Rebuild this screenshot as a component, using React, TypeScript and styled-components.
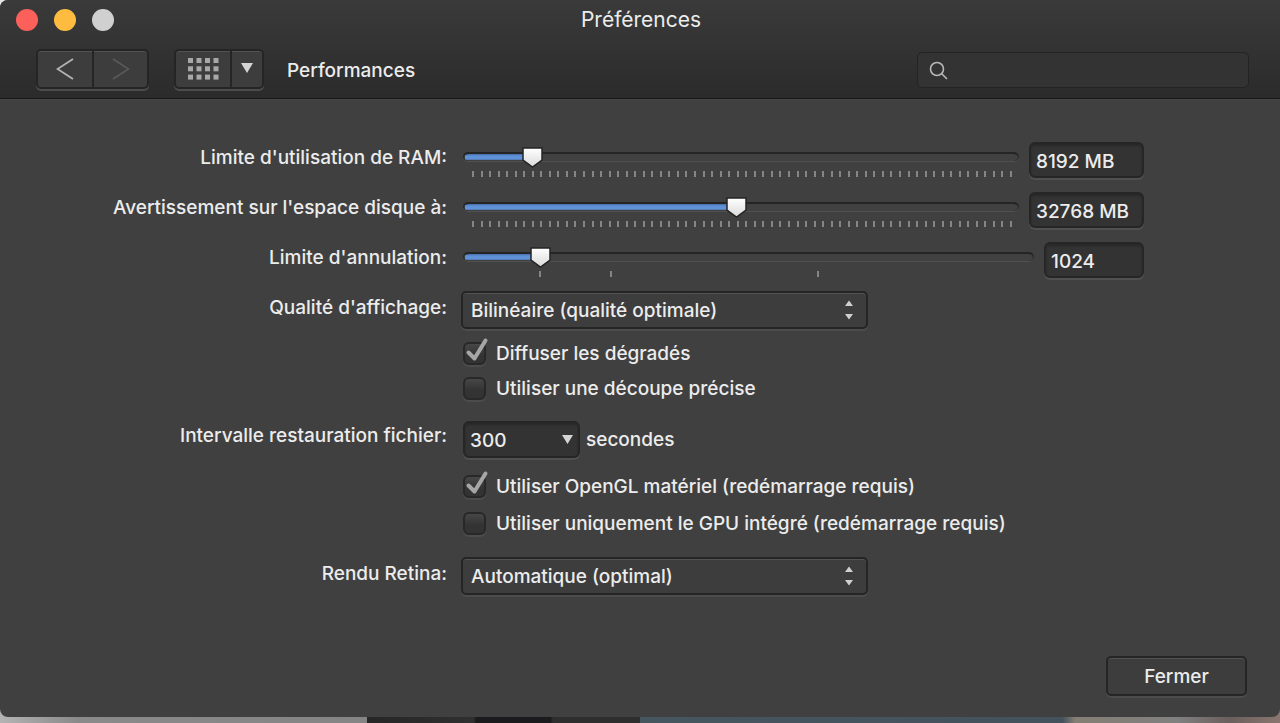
import React, { useState } from "react";
import styled, { createGlobalStyle, css } from "styled-components";

const GlobalStyle = createGlobalStyle`
  * { box-sizing: border-box; }
  body {
    margin: 0;
    background: #404040;
    color: #ececec;
    font: 500 19px/34px Inter, "Liberation Sans", sans-serif;
  }
  input, select, button { font: inherit; color: inherit; margin: 0; }
`;

const Desktop = styled.div`
  display: flex;
  min-height: 100vh;
  padding-bottom: 6px;
  background:
    radial-gradient(circle at 0 0, #e4e6ea 0 12px, transparent 12px),
    linear-gradient(90deg, #b4b4b4 0, #8a8a8a 6%, #848484 28.7%, #262626 28.7%, #303030 37%, #1b1b1d 37.2%, #1b1b1d 43%, #2e2e2e 43.2%, #2e2e2e 50%, #46565f 50%, #43525c 83%, #857f74 84%, #808080 92%, #6a5f5c 96%, #8a7670 100%);
`;

const Window = styled.div`
  flex: 1;
  display: flex;
  flex-direction: column;
  border-radius: 8px 0 8px 8px;
  overflow: hidden;
  background: #404040;
`;

const Header = styled.header`
  height: 99px;
  background: linear-gradient(#3a3a3a, #2b2b2b);
  border-bottom: 1px solid #161616;
  box-shadow: 0 1px 0 #484848;
`;

const TitleBar = styled.div`
  display: grid;
  grid-template-columns: 1fr auto 1fr;
  align-items: center;
  height: 40px;
  padding: 0 14px 0 16px;
`;

const Lights = styled.div`
  display: flex;
  gap: 16px;
`;

const Light = styled.button<{ $color: string }>`
  width: 22px;
  height: 22px;
  padding: 0;
  border: 0;
  border-radius: 50%;
  background: ${(p) => p.$color};
`;

const Title = styled.h1`
  margin: 0;
  font-size: 21px;
  font-weight: 400;
`;

const Toolbar = styled.div`
  display: flex;
  align-items: center;
  height: 60px;
  padding: 0 31px 0 36px;
`;

const raised = css`
  border: 2px solid #252525;
  border-radius: 5px;
  background: #3d3d3d;
  box-shadow: 0 2px 0 #4c4c4c, inset 0 1px 0 #525252;
`;

const sunken = css`
  border: 2px solid #262626;
  border-radius: 6px;
  background: #333333;
  box-shadow: 0 2px 0 #505050, inset 0 2px 2px #292929;
`;

const ButtonGroups = styled.div`
  display: flex;
  gap: 25px;
  padding-bottom: 3px;
`;

const Segments = styled.div`
  ${raised}
  display: flex;
  height: 40px;
`;

const Segment = styled.button<{ $width: number }>`
  display: flex;
  align-items: center;
  justify-content: center;
  width: ${(p) => p.$width}px;
  padding: 0;
  border: 0;
  background: none;
  & + & { border-left: 2px solid #252525; }
`;

const PaneName = styled.h2`
  flex: 1;
  margin: 0 0 0 23px;
  padding-top: 2px;
  font-size: 19px;
  font-weight: 500;
`;

const SearchBox = styled.label`
  display: flex;
  align-items: center;
  gap: 8px;
  width: 332px;
  height: 36px;
  padding: 0 10px;
  border: 1px solid #232323;
  border-radius: 5px;
  background: #333333;
`;

const SearchInput = styled.input`
  flex: 1;
  min-width: 0;
  height: 28px;
  border: 0;
  outline: 0;
  background: none;
`;

const Form = styled.main`
  flex: 1;
  padding: 42px 0 0;
`;

const Row = styled.div<{ $after: number }>`
  display: grid;
  grid-template-columns: 35% 1fr;
  column-gap: 13px;
  margin-bottom: ${(p) => p.$after}px;
`;

const RowLabel = styled.label`
  padding-right: 1px;
  text-align: right;
  white-space: nowrap;
`;

const Control = styled.div`
  grid-column: 2;
  display: flex;
  padding-right: 136px;
`;

const ComboControl = styled(Control)`
  align-items: center;
  padding-top: 2px;
`;

const SliderBox = styled.div`
  flex: 1;
  margin: 6px 10px 0 2px;
`;

const thumb = encodeURIComponent(
  `<svg xmlns="http://www.w3.org/2000/svg" width="21" height="21"><defs><linearGradient id="g" x2="0" y2="1"><stop offset="0" stop-color="#fff"/><stop offset="1" stop-color="#dadada"/></linearGradient></defs><path d="M1 1H20V13L10.500 20L1 13Z" fill="url(#g)" stroke="#242424" stroke-width="1.500"/></svg>`
);

const Slider = styled.input`
  display: block;
  appearance: none;
  width: 100%;
  height: 20px;
  background: none;
  outline: 0;
  &::-webkit-slider-runnable-track {
    height: 10px;
    border-radius: 5px;
    border-top: 2px solid #252525;
    border-bottom: 1px solid #505050;
    box-shadow: inset 1px 0 0 #252525, inset -1px 0 0 #252525;
    background: linear-gradient(#456ba5, #5f92d8 2px, #5f92d8 5px, #4a6a94 6px) 2px 0 / var(--fill) 6px no-repeat, #414141;
  }
  &::-webkit-slider-thumb {
    appearance: none;
    width: 21px;
    height: 21px;
    margin-top: -7px;
    border: 0;
    background: url("data:image/svg+xml,${thumb}") no-repeat;
  }
`;

const Ticks = styled.svg`
  display: block;
  width: calc(100% - 18px);
  height: 7px;
  margin: 4px 9px 0;
  overflow: visible;
  fill: #858585;
  shape-rendering: crispEdges;
`;

const Field = styled.input<{ $width: number }>`
  ${sunken}
  width: ${(p) => p.$width}px;
  height: 37px;
  padding: 2px 5px 0;
  outline: 0;
`;

const RangeField = styled(Field)`
  margin-top: 1px;
  height: 36px;
`;

const SelectBox = styled.div`
  display: grid;
  flex: 0 1 407px;
  height: 38px;
  > * { grid-area: 1 / 1; }
  > svg { place-self: center end; margin-right: 14px; pointer-events: none; }
`;

const Select = styled.select`
  ${raised}
  appearance: none;
  width: 100%;
  height: 38px;
  padding: 2px 36px 0 8px;
  line-height: 32px;
  outline: 0;
`;

const ComboBox = styled.div`
  display: grid;
  width: 117px;
  height: 37px;
  margin: 0 6px 0 2px;
  > * { grid-area: 1 / 1; }
  > svg { place-self: center end; margin-right: 7px; pointer-events: none; }
`;

const Check = styled.label`
  display: flex;
  align-items: center;
  height: 35px;
  padding: 2px 0 0 2px;
  white-space: nowrap;
`;

const CheckMark = styled.span`
  display: grid;
  width: 23px;
  height: 23px;
  margin-right: 10px;
  > * { grid-area: 1 / 1; }
  > svg { overflow: visible; pointer-events: none; }
  > input:not(:checked) + svg { visibility: hidden; }
`;

const CheckInput = styled.input`
  appearance: none;
  width: 23px;
  height: 23px;
  border: 2px solid #282828;
  border-radius: 6px;
  background: linear-gradient(#474747, #333333 60%);
  box-shadow: 0 2px 0 #4c4c4c;
`;

const Footer = styled.footer`
  display: flex;
  justify-content: flex-end;
  padding: 0 33px 21px;
`;

const CloseButton = styled.button`
  ${raised}
  width: 141px;
  height: 40px;
  padding: 2px 0 0;
`;

type RangeProps = { id: string; min: number; max: number; initial: number; step: number; ticks: number[]; unit: string; width: number };

function RangeRow({ id, label, ...p }: RangeProps & { label: string }) {
  const [value, setValue] = useState(p.initial);
  const ratio = (value - p.min) / (p.max - p.min);
  const style = { "--fill": `${ratio * 100}%` } as React.CSSProperties;
  return (
    <Row $after={13}>
      <RowLabel htmlFor={id}>{label}</RowLabel>
      <Control>
        <SliderBox>
          <Slider id={id} type="range" min={p.min} max={p.max} step={p.step} value={value} style={style}
            onChange={(e) => setValue(Number(e.target.value))} />
          <Ticks aria-hidden="true">
            {p.ticks.map((t) => <rect key={t} x={`${t * 100}%`} width="2" height="6" />)}
          </Ticks>
        </SliderBox>
        <RangeField $width={p.width} aria-label={label} value={`${value}${p.unit}`} readOnly />
      </Control>
    </Row>
  );
}

function CheckRow({ children, checked, after }: { children: string; checked?: boolean; after: number }) {
  return (
    <Row $after={after}>
      <Control>
        <Check>
          <CheckMark>
            <CheckInput type="checkbox" defaultChecked={checked} />
            <svg width="23" height="23" viewBox="0 0 23 23" fill="none" stroke="#a6a6a6" strokeWidth="4" strokeLinecap="round" strokeLinejoin="round">
              <path d="M5.500 10.500L11.500 16.500L22.500 -1.500" />
            </svg>
          </CheckMark>
          {children}
        </Check>
      </Control>
    </Row>
  );
}

function SelectRow({ id, label, options, after }: { id: string; label: string; options: string[]; after: number }) {
  return (
    <Row $after={after}>
      <RowLabel htmlFor={id}>{label}</RowLabel>
      <Control>
        <SelectBox>
          <Select id={id}>{options.map((o) => <option key={o}>{o}</option>)}</Select>
          <svg width="10" height="20" viewBox="0 0 10 20" fill="#d0d0d0">
            <path d="M5 0.500L9 6H1ZM5 19.500L9 14H1Z" />
          </svg>
        </SelectBox>
      </Control>
    </Row>
  );
}

const memoryTicks = Array.from({ length: 64 }, (_, i) => i / 63);

export default function App() {
  return (
    <>
      <GlobalStyle />
      <Desktop>
        <Window>
          <Header>
            <TitleBar>
              <Lights>
                <Light $color="#fc605b" aria-label="Fermer la fenêtre" />
                <Light $color="#fdbc40" aria-label="Réduire" />
                <Light $color="#d0d0d0" aria-label="Agrandir" />
              </Lights>
              <Title>Préférences</Title>
            </TitleBar>
            <Toolbar>
              <ButtonGroups>
                <Segments>
                  <Segment $width={54} aria-label="Précédent">
                    <svg width="18" height="22" viewBox="0 0 18 22" fill="none" stroke="#b4b4b4" strokeWidth="1.800"><path d="M17 1L1.500 11L17 21" /></svg>
                  </Segment>
                  <Segment $width={55} aria-label="Suivant" disabled>
                    <svg width="18" height="22" viewBox="0 0 18 22" fill="none" stroke="#5a5a5a" strokeWidth="1.500"><path d="M1 1L16.500 11L1 21" /></svg>
                  </Segment>
                </Segments>
                <Segments>
                  <Segment $width={54} aria-label="Tous les panneaux">
                    <svg width="31" height="22" fill="#a8a8a8">
                      {[0, 1, 2].map((r) => [0, 1, 2, 3].map((c) => <rect key={`${r}${c}`} x={c * 8.5} y={r * 8.3} width="5" height="5" />))}
                    </svg>
                  </Segment>
                  <Segment $width={32} aria-label="Choisir un panneau">
                    <svg width="12" height="12" fill="#d4d4d4"><path d="M0 0H12L6 10Z" /></svg>
                  </Segment>
                </Segments>
              </ButtonGroups>
              <PaneName>Performances</PaneName>
              <SearchBox>
                <svg width="22" height="22" viewBox="0 0 22 22" fill="none" stroke="#b8b8b8" strokeWidth="1.600"><circle cx="9" cy="10" r="6.500" /><path d="M13.500 14.500L19 20" /></svg>
                <SearchInput type="search" aria-label="Rechercher" />
              </SearchBox>
            </Toolbar>
          </Header>
          <Form>
            <RangeRow id="ram" label="Limite d'utilisation de RAM:" min={1024} max={65536} step={1024} initial={8192} unit=" MB" width={115} ticks={memoryTicks} />
            <RangeRow id="disk" label="Avertissement sur l'espace disque à:" min={1024} max={65536} step={1024} initial={32768} unit=" MB" width={115} ticks={memoryTicks} />
            <RangeRow id="undo" label="Limite d'annulation:" min={0} max={8448} step={1} initial={1024} unit="" width={100} ticks={[0.121, 0.249, 0.624]} />
            <SelectRow id="quality" label="Qualité d'affichage:" options={["Bilinéaire (qualité optimale)", "Plus proche voisin"]} after={6} />
            <CheckRow checked after={0}>Diffuser les dégradés</CheckRow>
            <CheckRow after={14}>Utiliser une découpe précise</CheckRow>
            <Row $after={10}>
              <RowLabel htmlFor="interval">Intervalle restauration fichier:</RowLabel>
              <ComboControl>
                <ComboBox>
                  <Field id="interval" $width={117} defaultValue="300" />
                  <svg width="11" height="9" fill="#d4d4d4"><path d="M0 0H11L5.500 9Z" /></svg>
                </ComboBox>
                <span>secondes</span>
              </ComboControl>
            </Row>
            <CheckRow checked after={2}>Utiliser OpenGL matériel (redémarrage requis)</CheckRow>
            <CheckRow after={17}>Utiliser uniquement le GPU intégré (redémarrage requis)</CheckRow>
            <SelectRow id="retina" label="Rendu Retina:" options={["Automatique (optimal)", "Basse qualité", "Haute qualité"]} after={0} />
          </Form>
          <Footer>
            <CloseButton>Fermer</CloseButton>
          </Footer>
        </Window>
      </Desktop>
    </>
  );
}
